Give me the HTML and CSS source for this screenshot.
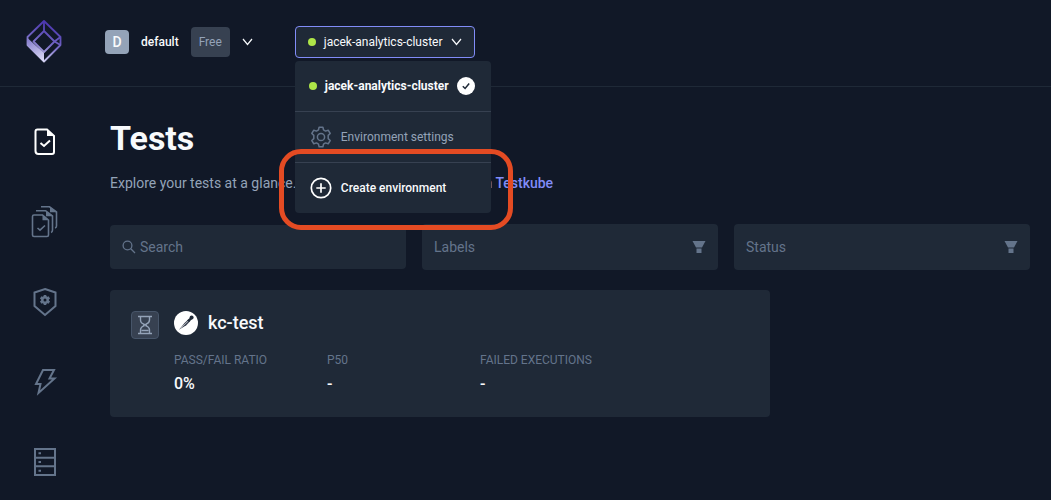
FILE: index.html
```html
<!DOCTYPE html>
<html lang="en">
<head>
<meta charset="utf-8">
<meta name="viewport" content="width=device-width, initial-scale=1">
<title>Tests</title>
<link rel="stylesheet" href="styles.css">
</head>
<body>
<header class="topbar">
  <a class="logo" href="#" aria-label="Testkube home">
    <svg width="36" height="44" viewBox="0 0 36 44" fill="none" stroke="url(#lg)" stroke-width="1.800" stroke-linejoin="round">
      <defs>
        <linearGradient id="lg" gradientUnits="userSpaceOnUse" x1="24" y1="4" x2="10" y2="40"><stop offset="0" stop-color="#4c36b0"/><stop offset=".5" stop-color="#7468c4"/><stop offset="1" stop-color="#d4d2f2"/></linearGradient>
        <linearGradient id="lf" gradientUnits="userSpaceOnUse" x1="4" y1="20" x2="14" y2="42"><stop offset="0" stop-color="#8a82cf"/><stop offset="1" stop-color="#dcdaf5"/></linearGradient>
      </defs>
      <path d="M18 1 34.500 17V25L18 41.500 1.500 25V17Z"/>
      <path d="M18 1V11L28.500 21.500 18 32 7.500 21.500 18 11M28.500 21.500 34.500 17M28.500 21.500 34.500 25"/>
      <path d="M1.500 18 18 33V42L1.500 25.500Z" fill="url(#lf)" stroke="none"/>
    </svg>
  </a>
  <button class="org" type="button">
    <span class="avatar">D</span>
    <span>default</span>
    <span class="plan">Free</span>
    <svg class="chevron" width="11" height="8" viewBox="0 0 11 8"><path d="M1 1 5.500 6.500 10 1"/></svg>
  </button>
  <div class="env">
    <button class="env-button" type="button" aria-haspopup="menu" aria-expanded="true">
      <span class="dot"></span>
      <span>jacek-analytics-cluster</span>
      <svg class="chevron" width="11" height="8" viewBox="0 0 11 8"><path d="M1 1 5.500 6.500 10 1"/></svg>
    </button>
    <div class="menu" role="menu">
      <button class="menu-item current" type="button" role="menuitem">
        <span class="dot"></span>
        <span>jacek-analytics-cluster</span>
        <svg width="18" height="18" viewBox="0 0 18 18" fill="none"><circle cx="9" cy="9" r="9" fill="#fff"/><path d="M5.800 9.200 8.100 11.500 12.200 6.500" stroke="#1f2937" stroke-width="1.500"/></svg>
      </button>
      <button class="menu-item muted" type="button" role="menuitem">
        <svg width="22" height="22" viewBox="0 0 22 22" fill="none" stroke="#64748b" stroke-width="1.500" stroke-linejoin="round"><path d="M9.100 1.200h3.800l.6 2.700 2 1.200 2.700-.9 2 3.300-2 1.900v3.200l2 1.900-2 3.300-2.700-.9-2 1.200-.6 2.700H9.100l-.6-2.700-2-1.200-2.700.9-2-3.300 2-1.900V9.400l-2-1.900 2-3.300 2.700.9 2-1.200Z"/><circle cx="11" cy="11" r="3.600"/></svg>
        <span>Environment settings</span>
      </button>
      <button class="menu-item create" type="button" role="menuitem">
        <svg width="22" height="22" viewBox="0 0 22 22" fill="none" stroke="#fff" stroke-width="1.700"><circle cx="11" cy="11" r="9.700"/><path d="M11 6.300v9.400M6.300 11h9.400"/></svg>
        <span>Create environment</span>
      </button>
      <div class="highlight"></div>
    </div>
  </div>
</header>
<div class="layout">
  <nav class="sidebar" aria-label="Main">
    <a class="nav-link active" href="#" aria-label="Tests">
      <svg width="28" height="32" viewBox="0 0 28 32"><path d="M6.500 3.500h9.500l7 6.500v16q0 2-2 2h-13.500q-3 0-3-3V5.500q0-2 2-2Z"/><path class="solid" d="M16 3v7h7.500Z"/><path d="m9.500 17 3.500 3 6-5.500"/></svg>
    </a>
    <a class="nav-link" href="#" aria-label="Test suites">
      <svg class="thin" width="28" height="32" viewBox="0 0 28 32"><path d="M3 9h8.500l6 5v15q0 1.500-1.500 1.500H3Q1.500 30.500 1.500 29V10.500Q1.500 9 3 9ZM5 4.700h9.500l7 5.300v14q0 2-1.500 2.500M10 .8h8.500l7 5.200v14q0 1.700-1.500 2"/><path class="solid" d="M11.500 9v5.200h6ZM15 4.500v5.700h6.500ZM19 .8v5.400h6.500Z"/><path d="m6.500 22 2.500 2.200 5-4.700"/></svg>
    </a>
    <a class="nav-link" href="#" aria-label="Executors">
      <svg width="28" height="32" viewBox="0 0 28 32"><path d="m14 3 10.500 3.500v13.500L14 29 3.500 20V6.500Z"/><path class="cog" d="M14 9v10M9.600 11.500l8.800 5M18.400 11.500l-8.800 5"/><circle class="cog-body" cx="14" cy="14" r="2.700"/></svg>
    </a>
    <a class="nav-link" href="#" aria-label="Triggers">
      <svg width="28" height="32" viewBox="0 0 28 32"><path d="M12 4h11L18.500 12.500h5L7.500 27l2-9H5Z"/></svg>
    </a>
    <a class="nav-link" href="#" aria-label="Sources">
      <svg width="28" height="32" viewBox="0 0 28 32"><path d="M4 3h20v26H4ZM4 11.700h20M4 20.300h20"/><path d="M7.500 7.300h2.500M7.500 16h2.500M7.500 24.700h2.500"/></svg>
    </a>
  </nav>
  <main class="main">
    <h1 class="title">Tests</h1>
    <p class="subtitle">Explore your tests at a glance. <a href="#">in Testkube</a></p>
    <div class="filters">
      <div class="field search">
        <svg width="14" height="14" viewBox="0 0 14 14" fill="none" stroke="#64748b" stroke-width="1.300"><circle cx="5.500" cy="5.500" r="4.400"/><path d="m8.800 8.800 4.200 4.200"/></svg>
        <input type="text" placeholder="Search" aria-label="Search">
      </div>
      <div class="field">
        <select aria-label="Labels"><option>Labels</option></select>
        <svg width="14" height="14" viewBox="0 0 14 14" fill="#64748b"><path d="M.5 1h13L10 7.500H4ZM4.500 8.500h5V13h-5Z"/></svg>
      </div>
      <div class="field">
        <select aria-label="Status"><option>Status</option></select>
        <svg width="14" height="14" viewBox="0 0 14 14" fill="#64748b"><path d="M.5 1h13L10 7.500H4ZM4.500 8.500h5V13h-5Z"/></svg>
      </div>
    </div>
    <article class="card">
      <span class="status">
        <svg width="16" height="20" viewBox="0 0 16 20" fill="none" stroke="#94a3b8" stroke-width="1.400"><path d="M1 1.500h14M1 18.500h14M3.500 1.500v3.500q0 3 3.500 4.200v1.600Q3.500 12 3.500 15v3.500M12.500 1.500v3.500q0 3-3.500 4.200v1.600q3.500 1.200 3.500 4.200v3.500M6 9.800h4M4.500 15.500h7"/></svg>
      </span>
      <div class="card-body">
        <h2 class="card-title">
          <svg width="24" height="24" viewBox="0 0 24 24"><circle cx="12" cy="12" r="12" fill="#fff"/><path d="M5 18.800 10.500 12l4-3.700 1.800 1.800-4 4.200Z" fill="#3b4252"/><path d="m6.500 17.300 8.500-8" stroke="#fff" stroke-width=".6"/><path d="m13 9.500 3.500-3.200 1.700 1.700-3.200 3Z" fill="#1f2937"/><circle cx="17.600" cy="6.500" r="2" fill="#1f2937"/></svg>
          kc-test
        </h2>
        <dl class="metrics">
          <div><dt>PASS/FAIL RATIO</dt><dd>0%</dd></div>
          <div><dt>P50</dt><dd>-</dd></div>
          <div><dt>FAILED EXECUTIONS</dt><dd>-</dd></div>
        </dl>
      </div>
    </article>
  </main>
</div>
</body>
</html>
```
FILE: styles.css
```css
* { box-sizing: border-box; }
body {
  margin: 0;
  min-height: 100vh;
  background: #111827;
  color: #f8fafc;
  font: 400 14px/20px Roboto, "Liberation Sans", sans-serif;
}
button, input, select { font: inherit; color: inherit; background: none; border: 0; padding: 0; margin: 0; }
button { cursor: pointer; }
svg { display: block; flex: none; }
.topbar {
  display: flex;
  align-items: center;
  height: 87px;
  padding: 0 26px 3px;
  border-bottom: 1px solid #1f2937;
}
.logo { margin-right: 43px; }
.org { display: flex; align-items: center; gap: 12px; font-size: 12px; font-weight: 500; }
.avatar {
  width: 24px;
  border-radius: 4px;
  background: #94a3b8;
  font-size: 14px;
  line-height: 24px;
}
.plan {
  padding: 0 8px;
  border-radius: 4px;
  background: #374151;
  color: #94a3b8;
  font-weight: 400;
  line-height: 30px;
}
.chevron { fill: none; stroke: #f8fafc; stroke-width: 1.2; }
.env { position: relative; margin-left: 42px; }
.env-button {
  display: flex;
  align-items: center;
  gap: 8px;
  height: 32px;
  padding: 0 12px;
  border: 1px solid #818cf8;
  border-radius: 4px;
  background: #1f2937;
  font-size: 12px;
}
.dot { width: 8px; height: 8px; border-radius: 50%; background: #aee548; }
.menu {
  position: absolute;
  z-index: 2;
  top: 35px;
  left: 0;
  width: 196px;
  border-radius: 4px;
  background: #1f2937;
  font-size: 12px;
}
.menu-item {
  display: flex;
  align-items: center;
  gap: 9px;
  width: 100%;
  height: 50px;
  padding: 0 15px;
}
.menu-item + .menu-item { height: 51px; border-top: 1px solid #374151; }
.current { gap: 8px; padding: 0 14px; font-weight: 700; }
.muted { color: #94a3b8; }
.create { font-weight: 500; }
.highlight {
  position: absolute;
  inset: auto -22px -17px -16px;
  height: 81px;
  border: 5px solid #e44b23;
  border-radius: 22px;
  pointer-events: none;
}
.layout { display: flex; }
.sidebar {
  display: flex;
  flex-direction: column;
  align-items: center;
  gap: 48px;
  width: 90px;
  padding-top: 39px;
}
.nav-link svg { fill: none; stroke: #64748b; stroke-width: 2; }
.nav-link .thin { stroke-width: 1.6; }
.nav-link .solid { fill: #64748b; stroke: none; }
.nav-link .cog { stroke-width: 2.6; }
.nav-link .cog-body { stroke-width: 2.4; fill: #111827; }
.nav-link.active svg { stroke: #fff; }
.nav-link.active .solid { fill: #fff; }
.main { flex: 1; padding: 31px 21px 0 20px; }
.title { margin: 0; font-size: 34px; font-weight: 700; line-height: 40px; }
.subtitle { margin: 15px 0 31px; color: #94a3b8; }
.subtitle a { margin-left: 181px; color: #818cf8; font-weight: 500; text-decoration: none; }
.filters { display: grid; grid-template-columns: repeat(3, 1fr); align-items: center; gap: 16px; }
.field {
  display: flex;
  align-items: center;
  gap: 4px;
  height: 46px;
  padding: 0 12px;
  border-radius: 4px;
  background: #1f2937;
  color: #64748b;
}
.search { height: 44px; }
.field input, .field select { flex: 1; min-width: 0; appearance: none; outline: none; }
.field input::placeholder { color: #64748b; opacity: 1; }
.card {
  display: flex;
  gap: 15px;
  max-width: 660px;
  margin-top: 20px;
  padding: 21px;
  border-radius: 4px;
  background: #1f2937;
}
.status {
  display: grid;
  place-items: center;
  width: 28px;
  height: 28px;
  border: 1px solid #475569;
  border-radius: 4px;
  background: #374151;
}
.card-body { flex: 1; }
.card-title { display: flex; align-items: center; gap: 10px; margin: 0; font-size: 18px; font-weight: 500; line-height: 24px; }
.metrics { display: grid; grid-template-columns: repeat(3, 137px); gap: 16px; margin: 15px 0 0; }
.metrics dt { color: #64748b; font-size: 12px; line-height: 20px; }
.metrics dd { margin: 2px 0 0; font-size: 16px; font-weight: 500; line-height: 24px; }
```
